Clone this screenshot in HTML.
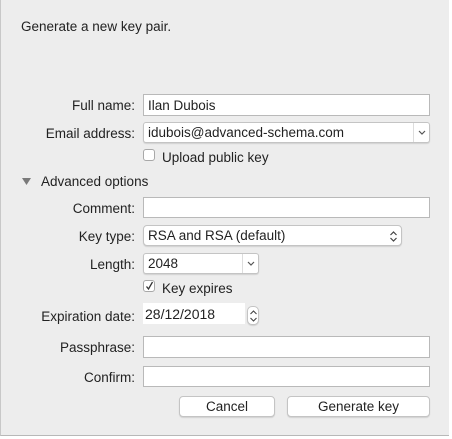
<!DOCTYPE html>
<html><head><style>
body{margin:0;width:452px;height:439px;background:#fff;position:relative;overflow:hidden;font-family:"Liberation Sans",sans-serif;font-size:13.5px;color:#222}
#w{position:absolute;left:0;top:0;width:449px;height:436px;background:#ededed;border-left:1px solid #c8c8c8;border-bottom:1px solid #b8b8b8;box-sizing:border-box}
.a{position:absolute}
.l{position:absolute;right:317px;text-align:right;white-space:nowrap;line-height:16px}
.f{position:absolute;background:#fff;border:1px solid #b9b9b9;box-sizing:border-box;line-height:21px;padding-left:4px;white-space:nowrap}
.p{position:absolute;background:#fff;border:1px solid #c4c4c4;border-radius:4px;box-sizing:border-box;line-height:20px;padding-left:4px;box-shadow:0 1px 1px rgba(0,0,0,.12)}
.cb{position:absolute;width:12px;height:12px;background:#fff;border:1px solid #a8a8a8;border-radius:3px;box-sizing:border-box}
.b{position:absolute;background:#fff;border:1px solid #c4c4c4;border-radius:4px;box-sizing:border-box;text-align:center;line-height:20px;box-shadow:0 1px 1px rgba(0,0,0,.12)}
</style></head><body>
<div id="w"></div>
<div class="a" style="left:21px;top:19px;line-height:16px">Generate a new key pair.</div>

<div class="l" style="top:98px">Full name:</div>
<div class="f" style="left:143px;top:94px;width:287px;height:22px">Ilan Dubois</div>

<div class="l" style="top:126px">Email address:</div>
<div class="p" style="left:143px;top:122px;width:287px;height:21px;border-radius:3px">idubois@advanced-schema.com
<div class="a" style="left:269px;top:0;width:1px;height:19px;background:#ddd"></div>
<svg class="a" style="left:273px;top:6px" width="10" height="7"><path d="M2 2l3 3 3-3" fill="none" stroke="#555" stroke-width="1.2"/></svg></div>

<div class="cb" style="left:143px;top:149px"></div>
<div class="a" style="left:162px;top:150px;line-height:16px">Upload public key</div>

<svg class="a" style="left:22px;top:177px" width="10" height="9"><path d="M0 1h9l-4.5 7z" fill="#7a7a7a"/></svg>
<div class="a" style="left:41px;top:174px;line-height:16px">Advanced options</div>

<div class="l" style="top:201px">Comment:</div>
<div class="f" style="left:143px;top:197px;width:287px;height:21px"></div>

<div class="l" style="top:229px">Key type:</div>
<div class="p" style="left:143px;top:225px;width:259px;height:21px">RSA and RSA (default)
<svg class="a" style="left:245px;top:4px" width="9" height="13"><path d="M1.5 5l3-3 3 3M1.5 8l3 3 3-3" fill="none" stroke="#444" stroke-width="1.2"/></svg></div>

<div class="l" style="top:257px">Length:</div>
<div class="p" style="left:143px;top:253px;width:116px;height:21px;border-radius:3px">2048
<div class="a" style="left:98px;top:0;width:1px;height:19px;background:#ddd"></div>
<svg class="a" style="left:102px;top:6px" width="10" height="7"><path d="M2 2l3 3 3-3" fill="none" stroke="#555" stroke-width="1.2"/></svg></div>

<div class="cb" style="left:143px;top:280px"></div>
<svg class="a" style="left:144px;top:280px" width="11" height="12"><path d="M2.5 6.5l2 2.5 4-7" fill="none" stroke="#333" stroke-width="1.3"/></svg>
<div class="a" style="left:162px;top:281px;line-height:16px">Key expires</div>

<div class="l" style="top:309px">Expiration date:</div>
<div class="a" style="left:143px;top:303px;width:100px;height:21px;background:#fff;line-height:22px;padding-left:2px;font-size:14px">28/12/2018</div>
<div class="p" style="left:247px;top:306px;width:12px;height:19px;border-radius:5px;padding:0">
<svg class="a" style="left:1px;top:2px" width="9" height="14"><path d="M1.5 5l3-3 3 3M1.5 9l3 3 3-3" fill="none" stroke="#444" stroke-width="1.1"/></svg></div>

<div class="l" style="top:340px">Passphrase:</div>
<div class="f" style="left:143px;top:336px;width:287px;height:22px"></div>

<div class="l" style="top:370px">Confirm:</div>
<div class="f" style="left:143px;top:366px;width:287px;height:21px"></div>

<div class="b" style="left:179px;top:396px;width:96px;height:21px">Cancel</div>
<div class="b" style="left:287px;top:396px;width:143px;height:21px">Generate key</div>
</body></html>
